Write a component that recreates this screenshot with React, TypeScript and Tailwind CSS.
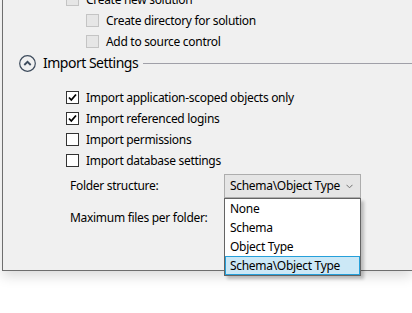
import React from "react";

function Check({ checked, disabled }: { checked?: boolean; disabled?: boolean }) {
  return (
    <div
      className={
        "w-[13px] h-[13px] shrink-0 border flex items-center justify-center " +
        (disabled ? "border-[#c4c4c4] bg-[#e6e6e6]" : "border-[#333333] bg-white")
      }
    >
      {checked && (
        <svg width="11" height="11" viewBox="0 0 11 11">
          <path d="M2 5.5 L4.3 8 L9 2.5" fill="none" stroke="#000" strokeWidth="1.8" />
        </svg>
      )}
    </div>
  );
}

function Row({ children, indent, checked, disabled }: { children: React.ReactNode; indent: string; checked?: boolean; disabled?: boolean }) {
  return (
    <div className={"h-[21px] flex items-center gap-[7px] " + indent}>
      <Check checked={checked} disabled={disabled} />
      <span className="text-[12px] tracking-[-0.3px] leading-none text-black whitespace-nowrap">{children}</span>
    </div>
  );
}

export default function App() {
  return (
    <div className="w-[412px] h-[313px] bg-white overflow-hidden" style={{ fontFamily: '"Noto Sans", "Open Sans", sans-serif' }}>
      <div className="ml-[2px] h-[282px] bg-[#f0f0f0] border-l border-b border-[#6e6e6e] shadow-[0_5px_12px_rgba(0,0,0,0.15)] relative">
        <div className="flex flex-col -mt-[11px]">
          <Row indent="pl-[63px]" disabled>Create new solution</Row>
          <Row indent="pl-[83px]" disabled>Create directory for solution</Row>
          <Row indent="pl-[83px]" disabled>Add to source control</Row>
          <div className="h-[22px] flex items-center pl-[16px]">
            <svg width="17" height="17" viewBox="0 0 17 17" className="shrink-0">
              <circle cx="8.5" cy="8.5" r="7.8" fill="none" stroke="#3d4b5c" strokeWidth="1.2" />
              <path d="M5.3 10 L8.5 6.8 L11.7 10" fill="none" stroke="#3d4b5c" strokeWidth="1.8" />
            </svg>
            <span className="ml-[7px] text-[14px] tracking-[-0.5px] leading-none text-black whitespace-nowrap">Import Settings</span>
            <div className="ml-[5px] flex-1 h-px bg-[#a0a0a8]" />
          </div>
          <div className="mt-[13px] flex flex-col">
            <Row indent="pl-[63px]" checked>Import application-scoped objects only</Row>
            <Row indent="pl-[63px]" checked>Import referenced logins</Row>
            <Row indent="pl-[63px]">Import permissions</Row>
            <Row indent="pl-[63px]">Import database settings</Row>
          </div>
          <div className="mt-[3px] flex items-center pl-[67px]">
            <span className="w-[154px] text-[12px] tracking-[-0.3px] leading-none text-black">Folder structure:</span>
            <div className="relative">
              <div className="w-[137px] h-[24px] border border-[#adadad] bg-[#e5e5e5] flex items-center justify-between pl-[5px] pr-[7px]">
                <span className="text-[12px] tracking-[-0.3px] leading-none text-black whitespace-nowrap">Schema\Object Type</span>
                <svg width="7" height="5" viewBox="0 0 7 5">
                  <path d="M0.5 0.8 L3.5 3.8 L6.5 0.8" fill="none" stroke="#707070" strokeWidth="1" />
                </svg>
              </div>
              <div className="absolute left-0 top-[24px] w-[137px] border border-[#646464] bg-white shadow-[3px_3px_3px_rgba(0,0,0,0.22)] z-10">
                {["None", "Schema", "Object Type"].map((t) => (
                  <div key={t} className="h-[19px] flex items-center pl-[5px] text-[12px] tracking-[-0.3px] leading-none text-black">
                    {t}
                  </div>
                ))}
                <div className="h-[19px] flex items-center pl-[4px] text-[12px] tracking-[-0.3px] leading-none text-black bg-[#cce8f6] border border-[#26a0da] whitespace-nowrap">
                  Schema\Object Type
                </div>
              </div>
            </div>
          </div>
          <div className="mt-[10px] h-[20px] flex items-center pl-[67px]">
            <span className="text-[12px] tracking-[-0.3px] leading-none text-black">Maximum files per folder:</span>
          </div>
        </div>
      </div>
    </div>
  );
}
